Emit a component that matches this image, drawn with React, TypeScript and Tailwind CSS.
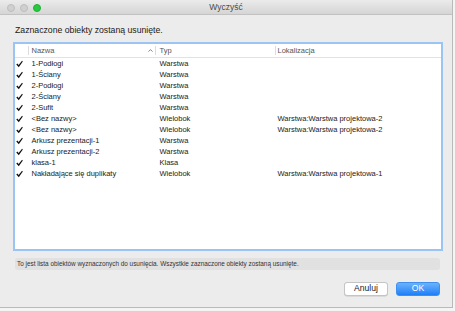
import React from 'react';

const rows = [
  { name: '1-Podłogi', type: 'Warstwa', loc: '' },
  { name: '1-Ściany', type: 'Warstwa', loc: '' },
  { name: '2-Podłogi', type: 'Warstwa', loc: '' },
  { name: '2-Ściany', type: 'Warstwa', loc: '' },
  { name: '2-Sufit', type: 'Warstwa', loc: '' },
  { name: '<Bez nazwy>', type: 'Wielobok', loc: 'Warstwa:Warstwa projektowa-2' },
  { name: '<Bez nazwy>', type: 'Wielobok', loc: 'Warstwa:Warstwa projektowa-2' },
  { name: 'Arkusz prezentacji-1', type: 'Warstwa', loc: '' },
  { name: 'Arkusz prezentacji-2', type: 'Warstwa', loc: '' },
  { name: 'klasa-1', type: 'Klasa', loc: '' },
  { name: 'Nakładające się duplikaty', type: 'Wielobok', loc: 'Warstwa:Warstwa projektowa-1' },
];

function Check() {
  return (
    <svg width="7" height="8" viewBox="0 0 8 8">
      <path d="M0.3 4.6 L1.6 3.5 L3 5 L6.9 0.4 L7.8 1.1 L3.2 7.6 Z" fill="#111" />
    </svg>
  );
}

function Light({ color }: { color: string }) {
  return <div className={`w-[8px] h-[8px] rounded-full ${color}`} />;
}

export default function App() {
  return (
    <div className="w-[455px] h-[311px] bg-[#f4f4f4] overflow-hidden" style={{ fontFamily: '"Liberation Sans", Arial, sans-serif' }}>
      <div className="w-[453px] h-[308px] bg-[#ececec] border-r border-b border-[#b9b9b9] flex flex-col">
        {/* title bar */}
        <div className="relative h-[15px] shrink-0 bg-gradient-to-b from-[#ebebeb] to-[#d5d5d5] border-b border-[#c2c2c2] flex items-center">
          <div className="flex gap-[5px] pl-[7px] pt-[1px]">
            <Light color="bg-[#d0d0d0] border border-[#bdbdbd]" />
            <Light color="bg-[#d0d0d0] border border-[#bdbdbd]" />
            <Light color="bg-[#27c93f] border border-[#1fb133]" />
          </div>
          <div className="absolute inset-0 flex items-center justify-center text-[8.5px] text-[#4a4a4a]">Wyczyść</div>
        </div>

        <div className="text-[8.7px] leading-[11px] text-[#1a1a1a] pl-[15px] mt-[10px]">Zaznaczone obiekty zostaną usunięte.</div>

        {/* table */}
        <div className="ml-[13px] mt-[6px] w-[430px] h-[209px] border-[2.5px] border-[#9cc4f3] bg-white">
          <div className="grid grid-cols-[12.5px_127px_120px_1fr] h-[13.5px] border-b border-[#e2e2e2] text-[7.5px] text-[#555] items-center">
            <div />
            <div className="relative border-l border-[#dcdcdc] pl-[3px] h-[9px] leading-[9px]">
              Nazwa
              <svg className="absolute right-[2px] top-[3px]" width="5" height="3" viewBox="0 0 5 3">
                <path d="M0.5 2.6 L2.5 0.6 L4.5 2.6" stroke="#666" strokeWidth="0.8" fill="none" />
              </svg>
            </div>
            <div className="border-l border-[#dcdcdc] pl-[4px] h-[9px] leading-[9px]">Typ</div>
            <div className="border-l border-[#dcdcdc] pl-[2px] h-[9px] leading-[9px]">Lokalizacja</div>
          </div>
          {rows.map((r, i) => (
            <div key={i} className="grid grid-cols-[12.5px_127px_120px_1fr] h-[11px] leading-[11px] text-[7.5px] text-[#1a1a1a]">
              <div className="flex items-center pl-[1px] pt-[1px]"><Check /></div>
              <div className="pl-[4px] whitespace-nowrap">{r.name}</div>
              <div className="pl-[5px] whitespace-nowrap">{r.type}</div>
              <div className="pl-[3px] whitespace-nowrap">{r.loc}</div>
            </div>
          ))}
        </div>

        {/* footer info */}
        <div className="ml-[15px] mt-[7px] w-[425px] h-[12px] rounded-[3px] bg-[#e1e1e1] text-[6.4px] leading-[12px] text-[#333] pl-[2px] whitespace-nowrap overflow-hidden">
          To jest lista obiektów wyznaczonych do usunięcia. Wszystkie zaznaczone obiekty zostaną usunięte.
        </div>

        {/* buttons */}
        <div className="flex justify-end gap-[8px] mt-[12px] pr-[12px]">
          <button className="w-[44px] h-[13.5px] rounded-[3px] bg-white border border-[#c4c4c4] shadow-[0_0.5px_0.5px_rgba(0,0,0,0.15)] text-[8.6px] leading-[11px] text-[#1a1a1a]">Anuluj</button>
          <button className="w-[44px] h-[13.5px] rounded-[3px] bg-gradient-to-b from-[#6ab2fb] to-[#1b7ff9] border border-[#3f8ff0] text-[8.6px] leading-[11px] text-white">OK</button>
        </div>
      </div>
    </div>
  );
}
